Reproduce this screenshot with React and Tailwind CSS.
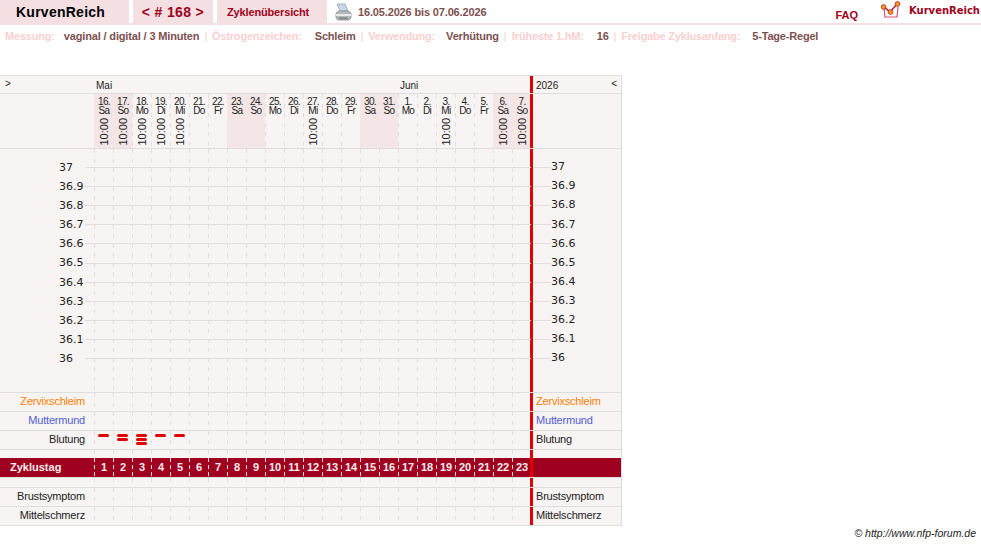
import React from "react";

const DAYS = [
  ["16.", "Sa", 1, 1], ["17.", "So", 1, 1], ["18.", "Mo", 1, 0], ["19.", "Di", 1, 0], ["20.", "Mi", 1, 0],
  ["21.", "Do", 0, 0], ["22.", "Fr", 0, 0], ["23.", "Sa", 0, 1], ["24.", "So", 0, 1], ["25.", "Mo", 0, 0],
  ["26.", "Di", 0, 0], ["27.", "Mi", 1, 0], ["28.", "Do", 0, 0], ["29.", "Fr", 0, 0], ["30.", "Sa", 0, 1],
  ["31.", "So", 0, 1], ["1.", "Mo", 0, 0], ["2.", "Di", 0, 0], ["3.", "Mi", 1, 0], ["4.", "Do", 0, 0],
  ["5.", "Fr", 0, 0], ["6.", "Sa", 1, 1], ["7.", "So", 1, 1],
];
const TEMPS = ["37", "36.9", "36.8", "36.7", "36.6", "36.5", "36.4", "36.3", "36.2", "36.1", "36"];
const BLOOD = [1, 2, 3, 1, 1];
const dash = "bg-[repeating-linear-gradient(to_bottom,#dedede_0,#dedede_4px,transparent_4px,transparent_9.5px)] bg-[length:1px_100%] bg-no-repeat";

function DayCells({ children }) {
  return (
    <div className="flex w-[437px] shrink-0">
      {DAYS.map((d, i) => (
        <div key={i} className={`w-[19px] shrink-0 ${dash}`}>
          {children ? children(i) : null}
        </div>
      ))}
    </div>
  );
}

function RedLine() {
  return <div className="w-[3px] -ml-[1px] shrink-0 bg-[#e00000]" />;
}

function Row({ label, color = "text-[#222]", height = "h-[19px]", children }) {
  return (
    <div className={`flex border-t border-[#dedede] ${height}`}>
      <div className={`w-[94px] shrink-0 pr-[9px] text-right text-[11px] leading-[17px] tracking-[-0.2px] ${color}`}>{label}</div>
      <DayCells>{children}</DayCells>
      <RedLine />
      <div className={`pl-[3px] text-[11px] leading-[17px] tracking-[-0.2px] ${color}`}>{label}</div>
    </div>
  );
}

function Meta({ label, value, sep = true, valueClass = "" }) {
  return (
    <>
      {sep && <span className="text-[#f8d0d0] mx-[5px]">|</span>}
      <span className="text-[#f8d0d0] font-bold">{label}</span>
      <span className={`font-bold text-[#7d5050] ${valueClass}`}>{value}</span>
    </>
  );
}

function Printer() {
  return (
    <svg width="17" height="18" viewBox="0 0 17 18">
      <path d="M2 1h8l3 7H5z" fill="#c8d8e8" stroke="#8a9aaa" strokeWidth="0.7" />
      <path d="M1 10l3-2h9l3 2v5l-2 2H3l-2-2z" fill="#b5b8bb" stroke="#808488" strokeWidth="0.7" />
      <path d="M1 11h15v2H1z" fill="#e8eaec" />
      <path d="M4 14h9v3H4z" fill="#8f9296" />
    </svg>
  );
}

function Logo() {
  return (
    <svg width="20" height="18" viewBox="0 0 20 18">
      <path d="M3 7l1 9h12l1-10" fill="none" stroke="#d85070" strokeWidth="1.2" />
      <path d="M2 5l7 6 7-8" fill="none" stroke="#b01030" strokeWidth="1.3" />
      <circle cx="2.6" cy="6" r="2.4" fill="#f59a10" stroke="#b01030" strokeWidth="0.7" />
      <circle cx="9.5" cy="11" r="2.4" fill="#f59a10" stroke="#b01030" strokeWidth="0.7" />
      <circle cx="16.5" cy="3" r="2.4" fill="#f59a10" stroke="#b01030" strokeWidth="0.7" />
    </svg>
  );
}

export default function App() {
  return (
    <div className="w-[981px] h-[545px] overflow-hidden bg-white font-['Liberation_Sans',Arial,sans-serif]">
      {/* Top bar */}
      <div className="flex h-[25px] border-b-2 border-[#f4e0e2]">
        <div className="w-[129px] bg-[#f4e0e2] pl-[16px] text-[14px] leading-[25px] font-bold tracking-[0.25px] text-black">KurvenReich</div>
        <div className="w-[80px] ml-[4px] bg-[#f4e0e2] text-center text-[14px] leading-[25px] font-bold tracking-[0.35px] text-[#a00020]">&lt; # 168 &gt;</div>
        <div className="w-[110px] ml-[4px] bg-[#f4e0e2] pl-[10px] text-[11px] leading-[24px] font-bold tracking-[-0.15px] text-[#a00020]">Zyklenübersicht</div>
        <div className="ml-[8px] mt-[3px]"><Printer /></div>
        <div className="ml-[6px] text-[11px] leading-[24px] font-bold tracking-[-0.15px] text-[#7d5050]">16.05.2026 bis 07.06.2026</div>
        <div className="ml-auto mr-[123px] pt-[3px] text-[11px] leading-[24px] font-bold text-[#a00020]">FAQ</div>
      </div>
      <div className="flex items-center gap-[8px] -mt-[25px] h-[20px] justify-end pr-[1px]">
        <Logo />
        <span className="text-[10px] font-bold font-['DejaVu_Sans',sans-serif] text-[#a00020]">KurvenReich</span>
      </div>

      {/* Settings line */}
      <div className="flex mt-[9px] h-[14px] pl-[5px] text-[11px] leading-[14px] tracking-[-0.2px] whitespace-nowrap">
        <Meta sep={false} label="Messung:" value="vaginal / digital / 3 Minuten" valueClass="ml-[9px] tracking-[-0.15px]" />
        <Meta label="Östrogenzeichen:" value="Schleim" valueClass="ml-[13px]" />
        <Meta label="Verwendung:" value="Verhütung" valueClass="ml-[11px]" />
        <Meta label="früheste 1.hM:" value="16" valueClass="ml-[13px]" />
        <Meta label="Freigabe Zyklusanfang:" value="5-Tage-Regel" valueClass="ml-[12px]" />
      </div>

      {/* Table */}
      <div className="mt-[32px] w-[622px] bg-[#f9f4f4] border-t border-r border-b border-[#dedede]">
        <div className="flex h-[17px] text-[10px] leading-[20px] text-[#222]">
          <div className="w-[96px] shrink-0 pl-[5px] leading-[15px]">&gt;</div>
          <div className="w-[304px] shrink-0">Mai</div>
          <div className="w-[131px] shrink-0">Juni</div>
          <RedLine />
          <div className="flex-1 pl-[3px] flex justify-between pr-[4px]">
            <span>2026</span>
            <span className="leading-[15px]">&lt;</span>
          </div>
        </div>
        <div className="flex h-[55px] border-t border-[#dedede]">
          <div className="w-[94px] shrink-0" />
          <div className="flex w-[437px] shrink-0">
            {DAYS.map((d, i) => (
              <div key={i} className={`w-[19px] shrink-0 flex flex-col items-center pt-[3px] pl-[1px] text-[10px] leading-[9px] tracking-[-0.6px] text-[#222] ${d[3] ? "bg-[#f4e6e6]" : dash}`}>
                <span>{d[0]}</span>
                <span>{d[1]}</span>
                {d[2] === 1 && (
                  <span className="mt-[3px] [writing-mode:vertical-rl] rotate-180 text-[11px] leading-[12px] tracking-[0px]">10:00</span>
                )}
              </div>
            ))}
          </div>
          <RedLine />
        </div>

        {/* Temperature chart */}
        <div className="flex h-[244px] border-t border-[#dedede] text-[11px] font-['DejaVu_Sans',sans-serif] text-[#222]">
          <div className="w-[85px] shrink-0 pt-[9px]">
            {TEMPS.map((t) => (
              <div key={t} className="h-[19.1px] leading-[19px] pl-[59px]">{t}</div>
            ))}
          </div>
          <div className="w-[446px] shrink-0 relative pt-[9px]">
            <div className="absolute inset-y-0 left-[9px] flex w-[437px]">
              {DAYS.map((d, i) => <div key={i} className={`w-[19px] shrink-0 ${dash}`} />)}
            </div>
            {TEMPS.map((t) => (
              <div key={t} className="h-[19.1px] flex items-center"><div className="h-px w-full bg-[#dedede]" /></div>
            ))}
          </div>
          <RedLine />
          <div className="flex-1 pt-[9px]">
            {TEMPS.map((t) => (
              <div key={t} className="h-[19.1px] flex items-center">
                <div className="h-px w-[18px] bg-[#dedede]" />
                <span>{t}</span>
              </div>
            ))}
          </div>
        </div>

        <Row label="Zervixschleim" color="text-[#ff8000]" />
        <Row label="Muttermund" color="text-[#5060d0]" />
        <Row label="Blutung">
          {(i) => (
            <div className="flex flex-col items-center gap-px pt-[3px]">
              {Array.from({ length: BLOOD[i] || 0 }).map((_, k) => (
                <div key={k} className="w-[11px] h-[3px] rounded-full bg-[#e00000]" />
              ))}
            </div>
          )}
        </Row>
        <Row label="" height="h-[9px]" />
        <div className="flex h-[19px] bg-[#a00020] text-[11px] leading-[19px] font-bold text-[#fbeeee]">
          <div className="w-[94px] shrink-0 pl-[10px]">Zyklustag</div>
          <div className="flex w-[437px] shrink-0">
            {DAYS.map((d, i) => (
              <div key={i} className="w-[19px] shrink-0 pl-[1px] text-center bg-[repeating-linear-gradient(to_bottom,#f9d8d8_0,#f9d8d8_4px,transparent_4px,transparent_7px)] bg-[length:1px_100%] bg-no-repeat">{i + 1}</div>
            ))}
          </div>
          <RedLine />
        </div>
        <Row label="" height="h-[10px]" />
        <Row label="Brustsymptom" />
        <Row label="Mittelschmerz" />
      </div>

      <div className="pr-[5px] text-right text-[10.5px] italic text-[#222]">© http://www.nfp-forum.de</div>
    </div>
  );
}
